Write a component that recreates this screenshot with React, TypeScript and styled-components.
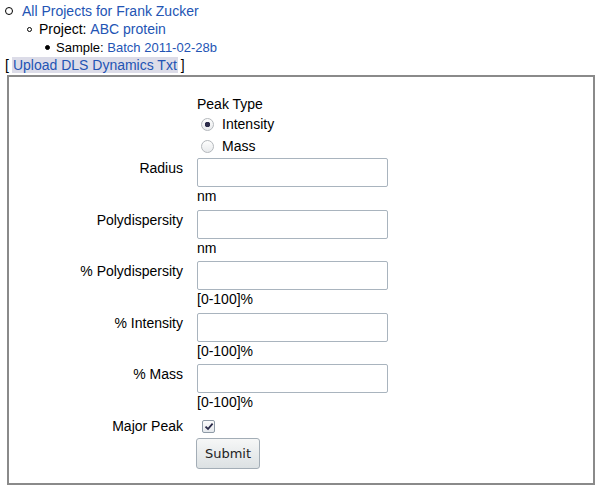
import React from "react"
import styled, { createGlobalStyle } from "styled-components"

const GlobalStyle = createGlobalStyle`
  body {
    margin: 0;
    background: #fff;
    font-family: "Liberation Sans", Arial, sans-serif;
    font-size: 14px;
    color: #000;
  }
`

const Page = styled.div`
  padding-top: 2px;
`

const NavList = styled.div`
  display: flex;
  flex-direction: column;
`

const NavItem = styled.div<{ indent: number; small?: boolean }>`
  display: flex;
  align-items: center;
  height: 18px;
  padding-left: ${(p) => p.indent}px;
  font-size: ${(p) => (p.small ? 13 : 14)}px;
`

const Bullet = styled.span<{ size: number; filled?: boolean; gap: number }>`
  display: inline-block;
  box-sizing: border-box;
  width: ${(p) => p.size}px;
  height: ${(p) => p.size}px;
  border-radius: 50%;
  border: 1px solid #000;
  background: ${(p) => (p.filled ? "#000" : "transparent")};
  margin-right: ${(p) => p.gap}px;
`

const Link = styled.a`
  color: #2354b4;
  text-decoration: none;
`

const UploadLine = styled.div`
  display: flex;
  align-items: center;
  height: 18px;
  padding-left: 5px;
`

const UploadLink = styled(Link)`
  background: #dcdce8;
  padding: 0 1px;
  margin: 0 3px 0 3px;
`

const FormBox = styled.div`
  box-sizing: border-box;
  margin: 1px 0 0 7px;
  width: 588px;
  height: 410px;
  border: 2px solid #8a8a8a;
  padding: 18px 0 0 0;
`

const FormGrid = styled.div`
  display: grid;
  grid-template-columns: 174px 191px;
  column-gap: 14px;
  align-items: start;
`

const Label = styled.div<{ pad?: number }>`
  text-align: right;
  line-height: 17px;
  padding-top: ${(p) => p.pad ?? 0}px;
`

const PeakType = styled.div`
  margin-bottom: 1px;
`

const Heading = styled.div`
  line-height: 18px;
  height: 18px;
`

const RadioRow = styled.label`
  display: flex;
  align-items: center;
  height: 22px;
  padding-left: 4px;
  gap: 8px;
`

const Radio = styled.span<{ checked?: boolean }>`
  box-sizing: border-box;
  width: 13px;
  height: 13px;
  border-radius: 50%;
  border: 1px solid #b4b8bc;
  background: radial-gradient(
      circle,
      ${(p) => (p.checked ? "#2c2c4a 0 2.5px, transparent 3px" : "transparent 0")},
      transparent
    ),
    linear-gradient(#fdfdfd, #e8eaec);
`

const Field = styled.div`
  display: flex;
  flex-direction: column;
  margin-bottom: 4.5px;
`

const TextInput = styled.input`
  box-sizing: border-box;
  width: 191px;
  height: 29px;
  border: 1px solid #a9b4be;
  border-radius: 2px;
  background: #fff;
  margin: 0;
  padding: 0 4px;
  font: inherit;
  outline: none;
`

const Unit = styled.div`
  line-height: 18px;
  height: 18px;
`

const CheckRow = styled.div`
  display: flex;
  align-items: center;
  height: 22px;
  padding-left: 5px;
`

const CheckBox = styled.span`
  box-sizing: border-box;
  width: 13px;
  height: 13px;
  border: 1px solid #8e9aa6;
  border-radius: 2px;
  background: linear-gradient(#fcfcfc, #e4e8ec);
  display: flex;
  align-items: center;
  justify-content: center;
`

const SubmitButton = styled.button`
  box-sizing: border-box;
  width: 64px;
  height: 31px;
  margin: 0 0 0 -1px;
  border: 1px solid #a3adb6;
  border-radius: 3px;
  background: linear-gradient(#f6f7f7, #dce1e3);
  font-family: "DejaVu Sans", sans-serif;
  font-size: 13px;
  color: #222;
  padding: 0;
`

const Spacer = styled.div``

type FieldDef = { label: string; unit: string }

const fields: FieldDef[] = [
  { label: "Radius", unit: "nm" },
  { label: "Polydispersity", unit: "nm" },
  { label: "% Polydispersity", unit: "[0-100]%" },
  { label: "% Intensity", unit: "[0-100]%" },
  { label: "% Mass", unit: "[0-100]%" },
]

export default function App() {
  return (
    <Page>
      <GlobalStyle />
      <NavList>
        <NavItem indent={5}>
          <Bullet size={8} gap={9} />
          <Link href="#">All Projects for Frank Zucker</Link>
        </NavItem>
        <NavItem indent={27}>
          <Bullet size={5} gap={7} />
          Project:&nbsp;<Link href="#">ABC protein</Link>
        </NavItem>
        <NavItem indent={45} small>
          <Bullet size={5} gap={6} filled />
          Sample:&nbsp;<Link href="#">Batch 2011-02-28b</Link>
        </NavItem>
      </NavList>
      <UploadLine>
        [<UploadLink href="#">Upload DLS Dynamics Txt</UploadLink>]
      </UploadLine>
      <FormBox>
        <FormGrid>
          <Spacer />
          <PeakType>
            <Heading>Peak Type</Heading>
            <RadioRow>
              <Radio checked />
              Intensity
            </RadioRow>
            <RadioRow>
              <Radio />
              Mass
            </RadioRow>
          </PeakType>
          {fields.map((f) => (
            <React.Fragment key={f.label}>
              <Label pad={2}>{f.label}</Label>
              <Field>
                <TextInput type="text" />
                <Unit>{f.unit}</Unit>
              </Field>
            </React.Fragment>
          ))}
          <Label pad={2}>Major Peak</Label>
          <CheckRow>
            <CheckBox>
              <svg width="10" height="9" viewBox="0 0 10 9">
                <path
                  d="M1.5 4.6 L4 7 L8.6 1.6"
                  fill="none"
                  stroke="#2a2a48"
                  strokeWidth="1.8"
                />
              </svg>
            </CheckBox>
          </CheckRow>
          <Spacer />
          <SubmitButton type="button">Submit</SubmitButton>
        </FormGrid>
      </FormBox>
    </Page>
  )
}
